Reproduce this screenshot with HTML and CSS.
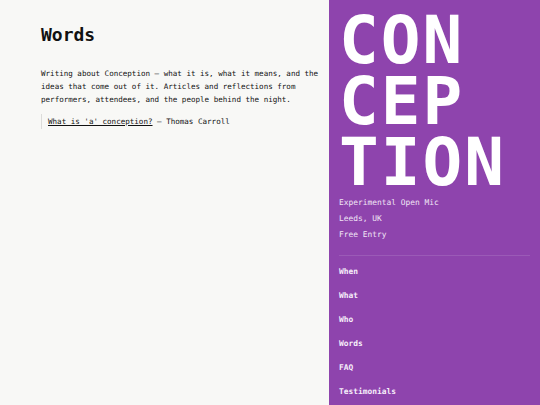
FILE: index.html
```html
<!DOCTYPE html>
<html lang="en">
<head>
<meta charset="utf-8">
<title>Words — Conception</title>
<link rel="stylesheet" href="styles.css">
</head>
<body>
<div class="page">
  <main class="main">
    <h1 class="title">Words</h1>
    <p class="intro">Writing about Conception — what it is, what it means, and the ideas that come out of it. Articles and reflections from performers, attendees, and the people behind the night.</p>
    <blockquote class="entry"><a href="#" class="entry-link">What is 'a' conception?</a> — Thomas Carroll</blockquote>
  </main>
  <aside class="side">
    <div class="logo">CON<br>CEP<br>TION</div>
    <ul class="facts">
      <li>Experimental Open Mic</li>
      <li>Leeds, UK</li>
      <li>Free Entry</li>
    </ul>
    <nav class="nav">
      <a href="#">When</a>
      <a href="#">What</a>
      <a href="#">Who</a>
      <a href="#">Words</a>
      <a href="#">FAQ</a>
      <a href="#">Testimonials</a>
    </nav>
  </aside>
</div>
</body>
</html>
```
FILE: styles.css
```css
* { box-sizing: border-box; }
html, body { margin: 0; padding: 0; height: 100%; }
body {
  font-family: "DejaVu Sans Mono", "Liberation Mono", monospace;
  background: #f8f8f6;
  color: #111;
}
.page {
  display: grid;
  grid-template-columns: 1fr 211px;
  height: 405px;
  overflow: hidden;
}
.main {
  padding: 24px 10px 0 41px;
}
.title {
  margin: 0;
  font-size: 18px;
  font-weight: bold;
  line-height: 22px;
}
.intro {
  margin: 21px 0 0;
  font-size: 7.55px;
  line-height: 13px;
}
.entry {
  margin: 8px 0 0;
  padding: 1px 0 1px 6px;
  border-left: 1px solid #dcdcda;
  font-size: 7.55px;
  line-height: 13px;
}
.entry-link {
  color: #111;
  text-decoration: underline;
}
.side {
  background: #8e44ad;
  color: #fff;
  padding: 10px 10px 0;
}
.logo {
  font-size: 66px;
  font-weight: bold;
  line-height: 61px;
  letter-spacing: 2px;
}
.facts {
  list-style: none;
  margin: 2px 0 0;
  padding: 0 0 12px;
  border-bottom: 1px solid rgba(255,255,255,0.12);
  font-size: 7.9px;
  line-height: 16px;
  color: #f1e6f6;
}
.nav {
  display: flex;
  flex-direction: column;
  padding-top: 4px;
}
.nav a {
  color: #f6eefa;
  text-decoration: none;
  font-size: 7.9px;
  font-weight: bold;
  line-height: 24px;
}
```
